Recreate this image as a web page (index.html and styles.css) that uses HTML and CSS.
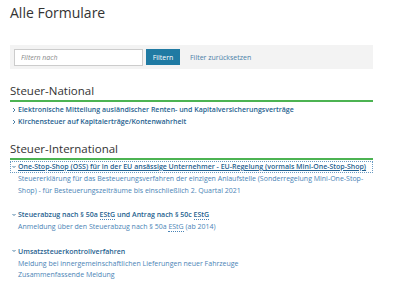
FILE: index.html
```html
<!DOCTYPE html>
<html lang="de">
<head>
    <meta charset="UTF-8">
    <title>Alle Formulare</title>
    <link rel="stylesheet" href="styles.css">
</head>
<body>
<div class="page">
    <h1 class="title">Alle Formulare</h1>

    <form class="filter-bar">
        <input class="filter-input" type="text" placeholder="Filtern nach">
        <button class="filter-btn" type="button">Filtern</button>
        <a class="filter-reset" href="#">Filter zurücksetzen</a>
    </form>

    <!-- Steuer-National -->
    <section class="group">
        <h2 class="group-title">Steuer-National</h2>
        <ul class="forms">
            <li><a class="form-link" href="#"><svg class="chev" viewBox="0 0 4 6"><path d="M1 1l2 2-2 2" /></svg>Elektronische Mitteilung ausländischer Renten- und Kapitalversicherungsverträge</a></li>
            <li><a class="form-link" href="#"><svg class="chev" viewBox="0 0 4 6"><path d="M1 1l2 2-2 2" /></svg>Kirchensteuer auf Kapitalerträge/Kontenwahrheit</a></li>
        </ul>
    </section>

    <!-- Steuer-International -->
    <section class="group">
        <h2 class="group-title">Steuer-International</h2>
        <ul class="forms">
            <li class="open">
                <a class="form-link focused" href="#"><svg class="chev" viewBox="0 0 4 6"><path d="M0.5 2l1.5 1.5 1.5-1.5" /></svg><u>One-Stop-Shop (OSS) für in der EU ansässige Unternehmer - EU-Regelung (vormals Mini-One-Stop-Shop)</u></a>
                <a class="sub-link" href="#">Steuererklärung für das Besteuerungsverfahren der einzigen Anlaufstelle (Sonderregelung Mini-One-Stop-Shop) - für Besteuerungszeiträume bis einschließlich 2. Quartal 2021</a>
            </li>
            <li class="open">
                <a class="form-link" href="#"><svg class="chev" viewBox="0 0 4 6"><path d="M0.5 2l1.5 1.5 1.5-1.5" /></svg>Steuerabzug nach § 50a <abbr>EStG</abbr> und Antrag nach § 50c <abbr>EStG</abbr></a>
                <a class="sub-link" href="#">Anmeldung über den Steuerabzug nach § 50a <abbr>EStG</abbr> (ab 2014)</a>
            </li>
            <li class="open">
                <a class="form-link" href="#"><svg class="chev" viewBox="0 0 4 6"><path d="M0.5 2l1.5 1.5 1.5-1.5" /></svg>Umsatzsteuerkontrollverfahren</a>
                <a class="sub-link" href="#">Meldung bei innergemeinschaftlichen Lieferungen neuer Fahrzeuge</a>
                <a class="sub-link" href="#">Zusammenfassende Meldung</a>
            </li>
        </ul>
    </section>
</div>
</body>
</html>
```

FILE: styles.css
```css
html, body {
    margin: 0;
    background: #fff;
    font-family: "Open Sans", "DejaVu Sans", sans-serif;
    color: #333;
}
.page {
    width: 363px;
    padding: 0 0 0 10px;
}
.title {
    font-size: 14px;
    font-weight: 400;
    margin: 0;
    padding-top: 3px;
    line-height: 20px;
    color: #333;
}
.filter-bar {
    display: flex;
    align-items: center;
    background: #f3f3f3;
    margin-top: 22px;
    height: 24px;
    padding: 0 4px;
}
.filter-input {
    box-sizing: border-box;
    width: 129px;
    height: 17px;
    border: 1px solid #ccc;
    background: #fff;
    font-family: inherit;
    font-size: 7px;
    font-style: italic;
    padding: 0 6px;
    margin: 0;
}
.filter-input::placeholder {
    color: #888;
}
.filter-btn {
    height: 16px;
    width: 34px;
    margin: 0 0 0 3px;
    padding: 0;
    border: 0;
    background: #1f7aa3;
    color: #fff;
    font-family: inherit;
    font-size: 7px;
}
.filter-reset {
    margin-left: 10px;
    font-size: 7px;
    color: #4a7fa8;
    text-decoration: none;
}
.group {
    margin-top: 14px;
}
.group + .group {
    margin-top: 13px;
}
.group-title {
    font-size: 11.5px;
    font-weight: 400;
    margin: 0;
    line-height: 16px;
    padding-bottom: 1px;
    border-bottom: 2px solid #4cb352;
}
.forms {
    list-style: none;
    margin: 0;
    padding: 2px 0 0;
}
.group + .group .forms {
    padding-top: 1px;
}
.forms li {
    display: flex;
    flex-direction: column;
}
.forms li.open + li.open {
    margin-top: 13px;
}
.form-link {
    display: block;
    font-size: 7px;
    font-weight: 600;
    line-height: 12px;
    color: #1f5f8f;
    text-decoration: none;
    padding-left: 2px;
}
.form-link u {
    text-decoration-thickness: 1px;
}
.focused {
    outline: 1px dotted #6a9bc3;
    outline-offset: -1px;
}
.chev {
    width: 4px;
    height: 6px;
    margin-right: 2px;
    vertical-align: -0.5px;
    fill: none;
    stroke: #1f5f8f;
    stroke-width: 0.8;
}
.sub-link {
    display: block;
    font-size: 7px;
    line-height: 11.5px;
    color: #4a84b6;
    text-decoration: none;
    padding-left: 8px;
    padding-right: 8px;
}
abbr {
    text-decoration: none;
    border-bottom: 1px dotted #4a84b6;
}
```
